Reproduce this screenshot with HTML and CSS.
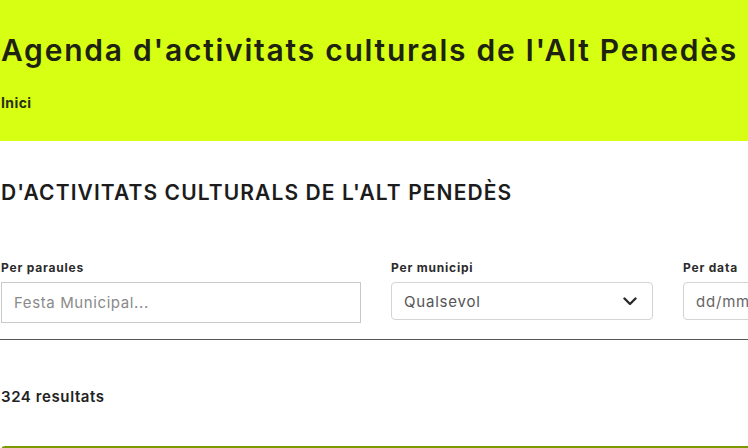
FILE: index.html
```html
<!DOCTYPE html>
<html lang="ca">
<head>
<meta charset="utf-8">
<title>Agenda d'activitats culturals de l'Alt Penedès</title>
<link rel="stylesheet" href="styles.css">
</head>
<body>
<header class="hero">
  <h1 class="hero-title">Agenda d'activitats culturals de l'Alt Penedès</h1>
  <nav class="crumbs"><a class="crumb" href="#">Inici</a></nav>
</header>
<main class="content">
  <h2 class="section-title">D'ACTIVITATS CULTURALS DE L'ALT PENEDÈS</h2>
  <form class="filters">
    <div class="field">
      <label class="field-label" for="q">Per paraules</label>
      <input class="text-input" id="q" type="text" placeholder="Festa Municipal...">
    </div>
    <div class="field">
      <label class="field-label" for="m">Per municipi</label>
      <div class="select-box" id="m">
        <span class="select-value">Qualsevol</span>
        <svg class="chevron" width="14" height="9" viewBox="0 0 14 9"><path d="M1.5 1.5 L7 7 L12.5 1.5" fill="none" stroke="#2b2b2b" stroke-width="2.4" stroke-linecap="round" stroke-linejoin="round"/></svg>
      </div>
    </div>
    <div class="field">
      <label class="field-label" for="d">Per data</label>
      <div class="date-box" id="d"><span class="date-value">dd/mm/aaaa</span></div>
    </div>
  </form>
  <hr class="divider">
  <p class="results">324 resultats</p>
  <div class="card"></div>
</main>
</body>
</html>
```

FILE: styles.css
```css
html, body {
  margin: 0;
  padding: 0;
}
body {
  width: 748px;
  height: 448px;
  overflow: hidden;
  background: #ffffff;
  font-family: "Inter", "DejaVu Sans", sans-serif;
  color: #222222;
}
.hero {
  background: #d6ff14;
  height: 141px;
  padding: 32px 0 0 1px;
  box-sizing: border-box;
}
.hero-title {
  margin: 0;
  font-size: 30px;
  line-height: 36px;
  font-weight: 600;
  letter-spacing: 1.75px;
  color: #1e2210;
  white-space: nowrap;
}
.crumbs {
  margin-top: 24px;
}
.crumb {
  font-size: 14px;
  line-height: 17px;
  font-weight: 700;
  letter-spacing: 0.4px;
  color: #2a2e18;
  text-decoration: none;
}
.content {
  padding: 0 0 0 1px;
}
.section-title {
  margin: 40px 0 0 0;
  font-size: 21px;
  line-height: 24px;
  font-weight: 600;
  letter-spacing: 1.1px;
  color: #1c1c1c;
  white-space: nowrap;
}
.filters {
  display: grid;
  grid-template-columns: 360px 262px 262px;
  column-gap: 30px;
  margin-top: 55px;
  align-items: start;
}
.field {
  display: flex;
  flex-direction: column;
}
.field-label {
  font-size: 12px;
  line-height: 15px;
  font-weight: 700;
  letter-spacing: 0.8px;
  color: #2b2b2b;
  margin-bottom: 7px;
  white-space: nowrap;
}
.text-input {
  box-sizing: border-box;
  height: 41px;
  width: 360px;
  border: 1px solid #c9c9c9;
  border-radius: 0;
  padding: 0 12px;
  font-family: inherit;
  font-size: 15px;
  letter-spacing: 0.6px;
  color: #333;
  outline: none;
}
.text-input::placeholder {
  color: #8a8a8a;
}
.select-box, .date-box {
  box-sizing: border-box;
  height: 38px;
  border: 1px solid #d4d4d4;
  border-radius: 4px;
  display: flex;
  align-items: center;
  padding: 0 12px;
  font-size: 15px;
  letter-spacing: 0.8px;
  color: #555555;
  overflow: hidden;
  white-space: nowrap;
}
.select-box {
  justify-content: space-between;
  padding-right: 15px;
}
.date-box {
  width: 262px;
  color: #666;
}
.divider {
  margin: 16px 0 0 -1px;
  border: 0;
  border-top: 1px solid #555555;
  height: 0;
}
.results {
  margin: 48px 0 0 0;
  font-size: 15px;
  line-height: 18px;
  font-weight: 600;
  letter-spacing: 0.6px;
  color: #222;
}
.card {
  margin-top: 40px;
  height: 40px;
  border-top: 2px solid #7c9a00;
  border-left: 1px solid #cfd8a8;
  border-radius: 4px 0 0 0;
}
```
